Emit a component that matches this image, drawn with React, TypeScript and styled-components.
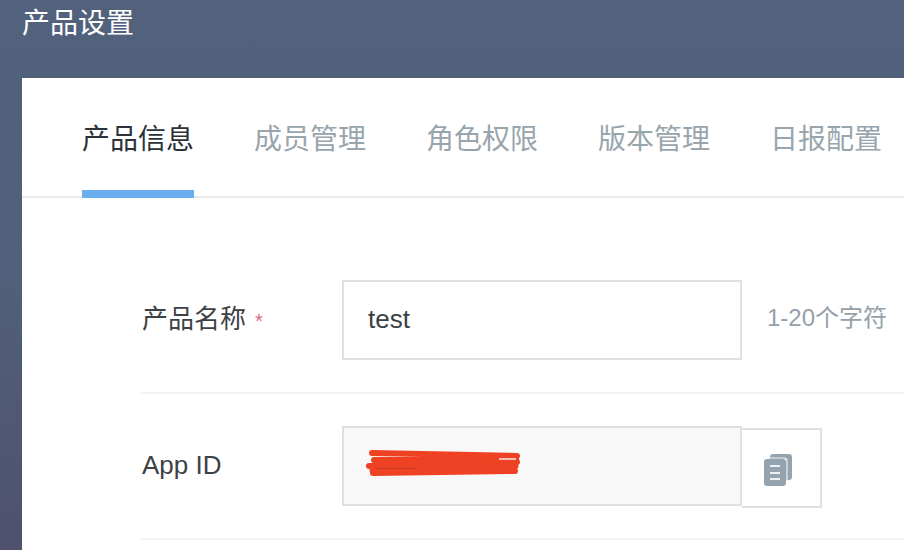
import React from "react";
import styled, { createGlobalStyle } from "styled-components";

const CJK = `"Liberation Sans", "Noto Sans CJK SC", sans-serif`;

const Global = createGlobalStyle`
  html, body { margin: 0; padding: 0; height: 100%; overflow: hidden; }
  body { font-family: ${CJK}; }
  * { box-sizing: border-box; }
`;

const Page = styled.div`
  width: 904px;
  height: 550px;
  overflow: hidden;
  background: linear-gradient(180deg, #52627c 0%, #51607a 50%, #4f516d 100%);
`;

const Header = styled.header`
  height: 78px;
  padding: 4px 0 0 22px;
  color: #ffffff;
  font-size: 28px;
  line-height: 40px;
`;

const Card = styled.main`
  margin-left: 22px;
  height: 472px;
  background: #ffffff;
`;

const TabBar = styled.nav`
  display: flex;
  gap: 60px;
  height: 120px;
  padding-left: 60px;
  border-bottom: 2px solid #e9eaeb;
  white-space: nowrap;
`;

const Tab = styled.div<{ $active?: boolean }>`
  height: 120px;
  width: 112px;
  flex: none;
  padding-top: 42px;
  font-size: 28px;
  line-height: 40px;
  color: ${(p) => (p.$active ? "#2c3238" : "#98a5ad")};
  border-bottom: 8px solid ${(p) => (p.$active ? "#6aaeef" : "transparent")};
`;

const Form = styled.section`
  padding: 82px 0 0 119px;
`;

const Row = styled.div`
  display: flex;
  align-items: flex-start;
  height: 114px;
  padding-bottom: 32px;
  margin-bottom: 32px;
  border-bottom: 2px solid #f3f4f4;
`;

const Label = styled.label`
  width: 201px;
  flex: none;
  padding-left: 1px;
  font-size: 26px;
  line-height: 78px;
  color: #3c4146;
`;

const Star = styled.span`
  margin-left: 9px;
  font-size: 20px;
  color: #dc6a82;
`;

const Field = styled.div<{ $readonly?: boolean }>`
  position: relative;
  width: 400px;
  height: 80px;
  flex: none;
  padding-left: 24px;
  border: 2px solid #e0e0e0;
  background: ${(p) => (p.$readonly ? "#f8f8f8" : "#ffffff")};
  font-size: 26px;
  line-height: 74px;
  color: #3a3f44;
`;

const Hint = styled.span`
  margin-left: 25px;
  font-size: 24px;
  line-height: 76px;
  color: #96a0a8;
  white-space: nowrap;
`;

const CopyButton = styled.button`
  width: 80px;
  height: 80px;
  flex: none;
  margin: 2px 0 0 0;
  padding: 4px 6px 0 0;
  display: flex;
  align-items: center;
  justify-content: center;
  background: #ffffff;
  border: 2px solid #e0e0e0;
  border-left: none;
`;

const Scribble = styled.svg`
  position: absolute;
  left: 22px;
  top: 19px;
`;

const Redaction = () => (
  <Scribble width="160" height="36" viewBox="0 0 160 36" fill="none">
    <g stroke="#ef4224" strokeLinecap="round" strokeLinejoin="round">
      <path d="M6 6 L151 9" strokeWidth="6" />
      <path d="M8 13 L150 13" strokeWidth="6" />
      <path d="M3 19 L151 15" strokeWidth="6" />
      <path d="M7 23 L149 19" strokeWidth="7" />
      <path d="M7 26 L149 24" strokeWidth="6" />
    </g>
    <path d="M133 12 H150" stroke="#f7e9e4" strokeWidth="1.5" />
    <path d="M10 21.5 H50" stroke="#a8331f" strokeWidth="1" opacity="0.6" />
  </Scribble>
);

const CopyIcon = () => (
  <svg width="28" height="32" viewBox="0 0 28 32">
    <path d="M6 3 Q6 0 9 0 H25 Q28 0 28 3 V23 Q28 26 25 26 H22 V5 H6 Z" fill="#94a3ae" />
    <rect x="0" y="5" width="22" height="27" rx="3" fill="#94a3ae" stroke="#f2f4f6" strokeWidth="0" />
    <path d="M5 4 H20 Q23 4 23 7 V28" stroke="#eef1f3" strokeWidth="1.2" fill="none" />
    <rect x="6" y="11" width="10" height="2" fill="#eef1f3" />
    <rect x="6" y="18" width="10" height="2" fill="#eef1f3" />
    <rect x="6" y="24" width="10" height="2" fill="#eef1f3" />
  </svg>
);

export default function App() {
  return (
    <Page>
      <Global />
      <Header>产品设置</Header>
      <Card>
        <TabBar>
          <Tab $active>产品信息</Tab>
          <Tab>成员管理</Tab>
          <Tab>角色权限</Tab>
          <Tab>版本管理</Tab>
          <Tab>日报配置</Tab>
        </TabBar>
        <Form>
          <Row>
            <Label>
              产品名称<Star>*</Star>
            </Label>
            <Field>test</Field>
            <Hint>1-20个字符</Hint>
          </Row>
          <Row>
            <Label>App ID</Label>
            <Field $readonly>
              <Redaction />
            </Field>
            <CopyButton aria-label="复制">
              <CopyIcon />
            </CopyButton>
          </Row>
        </Form>
      </Card>
    </Page>
  );
}
